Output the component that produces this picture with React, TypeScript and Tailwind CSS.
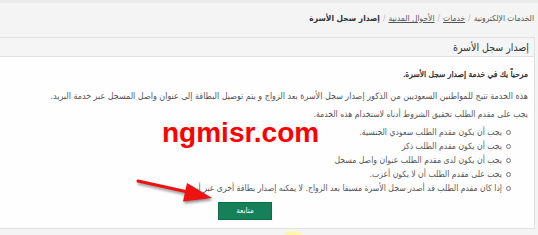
import React from "react";

// ─── Data ─────────────────────────────────────────────────────────────────────
const CONDITIONS: string[] = [
  "يجب أن يكون مقدم الطلب سعودي الجنسية.",
  "يجب أن يكون مقدم الطلب ذكر",
  "يجب أن يكون لدى مقدم الطلب عنوان واصل مسجل",
  "يجب على مقدم الطلب أن لا يكون أعزب.",
  "إذا كان مقدم الطلب قد أصدر سجل الأسرة مسبقا بعد الزواج. لا يمكنه إصدار بطاقة أخرى عبر أبشر",
];

// ─── Breadcrumb ───────────────────────────────────────────────────────────────
function Breadcrumb() {
  const sep = <span className="mx-[3px] text-[#bbb]">/</span>;
  return (
    <div className="flex items-center text-[8.4px] leading-[12px] text-[#555]">
      <span>الخدمات الإلكترونية</span>
      {sep}
      <span className="underline">خدمات</span>
      {sep}
      <span className="underline">الأحوال المدنية</span>
      {sep}
      <span className="font-bold text-[#333]">إصدار سجل الأسرة</span>
    </div>
  );
}

// ─── Red pointer arrow (drawing) ──────────────────────────────────────────────
function Arrow() {
  return (
    <svg
      className="absolute left-0 top-0 drop-shadow-[1px_2px_1.5px_rgba(0,0,0,0.45)]"
      width="538"
      height="235"
      viewBox="0 0 538 235"
    >
      <line x1="138" y1="181" x2="190" y2="192.5" stroke="#ee1111" strokeWidth="3" strokeLinecap="round" />
      <polygon points="212,198 183,201.5 187,183" fill="#ee1111" />
    </svg>
  );
}

// ─── Page ─────────────────────────────────────────────────────────────────────
export default function App() {
  return (
    <div
      dir="rtl"
      className="relative w-[538px] h-[235px] overflow-hidden bg-[#f4f4f4] font-['DejaVu_Sans_Condensed','DejaVu_Sans',sans-serif]"
    >
      <div className="h-[3px] bg-[#ebebeb]" />

      {/* ── Breadcrumb ── */}
      <div className="h-[34px] pt-[9px] pr-[4px]">
        <Breadcrumb />
      </div>

      {/* ── Panel ── */}
      <div className="mr-[3px] border-y border-r border-[#e2e2e2] bg-[#fefefe]">
        <div className="h-[19px] bg-[#f5f5f5] border-b border-[#e2e2e2] pr-[5px] text-[10.5px] leading-[19px] text-[#333]">
          إصدار سجل الأسرة
        </div>

        <div className="pt-[10px] pr-[6px] pb-[8px] text-[8.6px] leading-[14px] text-[#555]">
          <p className="text-[8.4px] text-[#1e1e1e] [-webkit-text-stroke:0.25px_#1e1e1e]">
            مرحباً بك في خدمة إصدار سجل الأسرة.
          </p>
          <p className="mt-[8px] whitespace-nowrap text-[8.9px]">
            هذه الخدمة تتيح للمواطنين السعوديين من الذكور إصدار سجل الأسرة بعد الزواج و يتم توصيل البطاقة إلى عنوان واصل المسجل عبر خدمة البريد.
          </p>
          <p className="mt-[4px]">يجب على مقدم الطلب تحقيق الشروط أدناه لاستخدام هذه الخدمة.</p>

          <ul className="mt-[4px] pr-[17px]">
            {CONDITIONS.map((c) => (
              <li key={c} className="flex items-center gap-[4px] h-[14px]">
                <span className="w-[5px] h-[5px] rounded-full border border-[#777] shrink-0" />
                <span>{c}</span>
              </li>
            ))}
          </ul>

          <div className="mt-[7px] flex pr-[256px]">
            <button className="w-[54px] h-[18px] bg-[#16805a] border border-[#0f6b4a] text-white text-[8px] leading-[16px]">
              متابعة
            </button>
          </div>
        </div>
      </div>

      {/* ── Overlays: watermark, arrow, yellow blob ── */}
      <div
        dir="ltr"
        className="absolute left-[162px] top-[117px] text-[28px] leading-[32px] font-bold text-[#ff0000] font-['Liberation_Sans',Arial,sans-serif]"
      >
        ngmisr.com
      </div>
      <Arrow />
      <div className="absolute left-[278px] top-[231px] w-[30px] h-[30px] rounded-full bg-[#fff7a8]" />
    </div>
  );
}
